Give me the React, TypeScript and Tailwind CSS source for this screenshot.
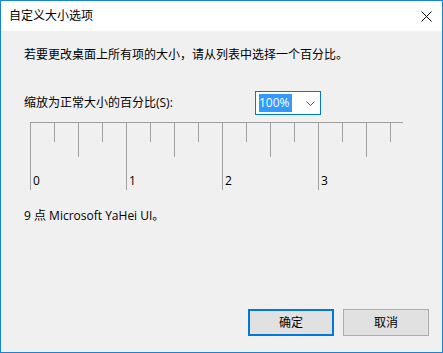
import React from "react";

const font = { fontFamily: '"Open Sans", "Noto Sans CJK SC", sans-serif' };

function Ruler() {
  const ticks: React.ReactNode[] = [];
  for (let i = 0; i <= 15; i++) {
    const x = 0.5 + i * 24;
    let y2 = 20;
    if (i % 4 === 0) y2 = 68;
    else if (i % 2 === 0) y2 = 35;
    ticks.push(<line key={i} x1={x} y1={0} x2={x} y2={y2} stroke="#a0a0a0" strokeWidth={1} />);
  }
  const labels = ["0", "1", "2", "3"];
  return (
    <svg width="374" height="70" className="block" style={font}>
      <line x1={0} y1={0.5} x2={373} y2={0.5} stroke="#a0a0a0" strokeWidth={1} />
      {ticks}
      {labels.map((l, i) => (
        <text key={l} x={3 + i * 96} y={63} fontSize="12" fill="#000">
          {l}
        </text>
      ))}
    </svg>
  );
}

export default function App() {
  return (
    <div
      className="w-[443px] h-[353px] border border-[#1883d7] flex flex-col text-[12px] text-black bg-[#f0f0f0]"
      style={font}
    >
      <div className="h-[30px] bg-white flex items-center justify-between pl-2 pr-[10px]">
        <span className="leading-none">自定义大小选项</span>
        <svg width="11" height="11" viewBox="0 0 11 11">
          <line x1="0.5" y1="0.5" x2="10.5" y2="10.5" stroke="#000" strokeWidth="1" />
          <line x1="10.5" y1="0.5" x2="0.5" y2="10.5" stroke="#000" strokeWidth="1" />
        </svg>
      </div>
      <div className="flex-1 flex flex-col pl-[23px] pr-[13px] pt-[16px] pb-[16px]">
        <div className="h-[16px] leading-[16px]">若要更改桌面上所有项的大小，请从列表中选择一个百分比。</div>
        <div className="flex items-center mt-[28px]">
          <div className="w-[231px] leading-[16px]">缩放为正常大小的百分比(S):</div>
          <div className="w-[66px] h-[24px] border border-[#0078d7] bg-white flex items-center pl-[3px] pr-[5px]">
            <span className="bg-[#3399ff] text-white h-[18px] w-[33px] leading-[18px] flex items-center">100%</span>
            <span className="flex-1" />
            <svg width="9" height="5" viewBox="0 0 9 5">
              <polyline points="0.5,0.5 4.5,4.5 8.5,0.5" fill="none" stroke="#555" strokeWidth="1" />
            </svg>
          </div>
        </div>
        <div className="mt-[7px] ml-[6px]">
          <Ruler />
        </div>
        <div className="mt-[16px] leading-[16px]">9 点 Microsoft YaHei UI。</div>
        <div className="mt-auto flex justify-end gap-[9px]">
          <button className="w-[86px] h-[27px] bg-[#e1e1e1] border-2 border-[#0078d7] text-[12px]" style={font}>
            确定
          </button>
          <button className="w-[86px] h-[27px] bg-[#e1e1e1] border border-[#adadad] text-[12px]" style={font}>
            取消
          </button>
        </div>
      </div>
    </div>
  );
}
